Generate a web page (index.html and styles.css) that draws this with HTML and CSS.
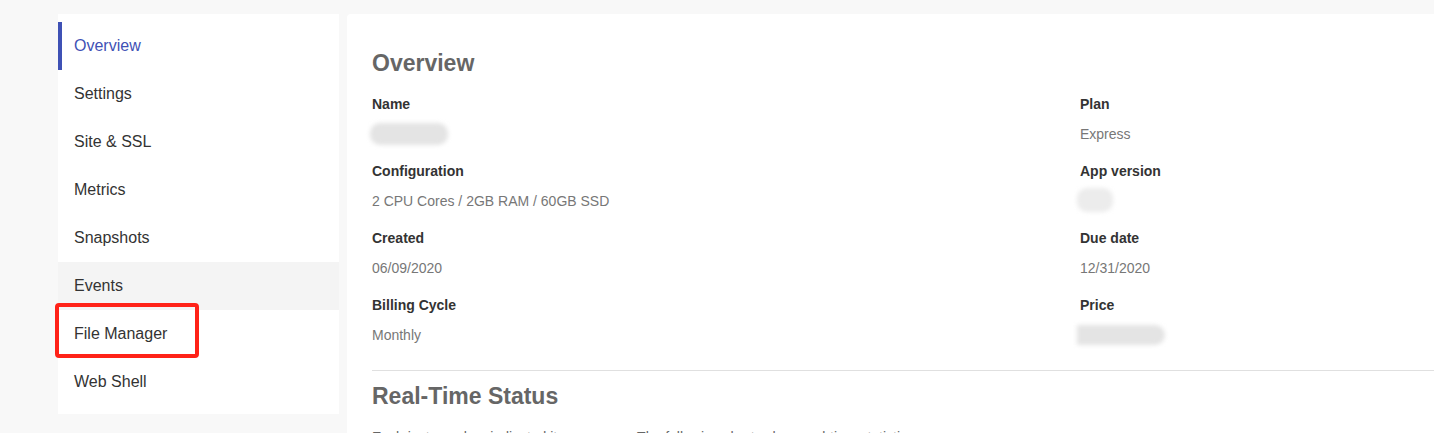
FILE: index.html
```html
<!DOCTYPE html>
<html lang="en">

<head>
    <meta charset="UTF-8">
    <meta name="viewport" content="width=device-width, initial-scale=1.0">
    <title>Overview</title>
    <link rel="stylesheet" href="styles.css">
</head>

<body>
    <div class="layout">
        <nav class="sidebar">
            <a class="nav-item active" href="#">Overview</a>
            <a class="nav-item" href="#">Settings</a>
            <a class="nav-item" href="#">Site &amp; SSL</a>
            <a class="nav-item" href="#">Metrics</a>
            <a class="nav-item" href="#">Snapshots</a>
            <a class="nav-item hover" href="#">Events</a>
            <a class="nav-item marked" href="#">File Manager<span class="mark"></span></a>
            <a class="nav-item" href="#">Web Shell</a>
        </nav>
        <main class="panel">
            <h2>Overview</h2>
            <div class="fields">
                <div class="field">
                    <div class="label">Name</div>
                    <div class="value"><span class="blur blur-name"></span></div>
                </div>
                <div class="field">
                    <div class="label">Plan</div>
                    <div class="value">Express</div>
                </div>
                <div class="field">
                    <div class="label">Configuration</div>
                    <div class="value">2 CPU Cores / 2GB RAM / 60GB SSD</div>
                </div>
                <div class="field">
                    <div class="label">App version</div>
                    <div class="value"><span class="blur blur-version"></span></div>
                </div>
                <div class="field">
                    <div class="label">Created</div>
                    <div class="value">06/09/2020</div>
                </div>
                <div class="field">
                    <div class="label">Due date</div>
                    <div class="value">12/31/2020</div>
                </div>
                <div class="field">
                    <div class="label">Billing Cycle</div>
                    <div class="value">Monthly</div>
                </div>
                <div class="field">
                    <div class="label">Price</div>
                    <div class="value"><span class="blur blur-price"></span></div>
                </div>
            </div>
            <hr>
            <h2>Real-Time Status</h2>
            <p>Each instance has indicated its resources. The following charts show real-time statistics.</p>
        </main>
    </div>
</body>

</html>
```

FILE: styles.css
```css
html,
body {
    height: 433px;
    overflow: hidden;
}

body {
    background-color: rgb(248, 248, 248);
    color: rgb(51, 51, 51);
    font-family: "Liberation Sans", Arial, sans-serif;
    margin: 0;
    padding: 14px 0 0 58px;
}

.layout {
    align-items: flex-start;
    display: flex;
    gap: 8px;
}

.sidebar {
    background-color: rgb(255, 255, 255);
    box-sizing: border-box;
    display: flex;
    flex: none;
    flex-direction: column;
    padding: 8px 0;
    width: 281px;
}

.nav-item {
    border-left: 4px solid transparent;
    color: rgb(51, 51, 51);
    display: block;
    font-size: 16px;
    height: 48px;
    line-height: 48px;
    padding-left: 12px;
    position: relative;
    text-decoration: none;
}

.nav-item.active {
    border-left-color: rgb(63, 81, 181);
    color: rgb(63, 81, 181);
}

.nav-item.hover {
    background-color: rgb(244, 244, 244);
}

.mark {
    border: 4px solid rgb(255, 34, 24);
    border-radius: 4px;
    box-sizing: border-box;
    height: 55px;
    left: -7px;
    position: absolute;
    top: -7px;
    width: 144px;
}

.panel {
    background-color: rgb(255, 255, 255);
    border-radius: 4px 0 0 0;
    flex: 1;
    height: 600px;
    padding: 34px 0 0 25px;
}

h2 {
    color: rgb(102, 102, 102);
    font-size: 23px;
    font-weight: bold;
    line-height: 30px;
    margin: 0 0 16px;
}

.fields {
    display: grid;
    grid-template-columns: 708px 1fr;
}

.field {
    margin-bottom: 17px;
}

.label {
    color: rgb(51, 51, 51);
    font-size: 14px;
    font-weight: bold;
    height: 20px;
    line-height: 20px;
    margin-bottom: 10px;
}

.value {
    color: rgb(119, 119, 119);
    font-size: 14px;
    height: 20px;
    line-height: 20px;
}

.blur {
    background-color: rgb(228, 228, 228);
    border-radius: 10px;
    display: inline-block;
    filter: blur(2px);
    vertical-align: top;
}

.blur-name {
    height: 22px;
    margin: -1px 0 0 -2px;
    width: 78px;
}

.blur-version {
    background-color: rgb(236, 236, 236);
    height: 24px;
    margin: -3px 0 0 -3px;
    width: 36px;
}

.blur-price {
    border-radius: 0 10px 10px 0;
    height: 20px;
    margin-left: -3px;
    width: 88px;
}

hr {
    border: none;
    border-top: 1px solid rgb(224, 224, 224);
    margin: 8px 0 10px;
}

p {
    color: rgb(102, 102, 102);
    font-size: 14px;
    line-height: 20px;
    margin: 0;
}
```
